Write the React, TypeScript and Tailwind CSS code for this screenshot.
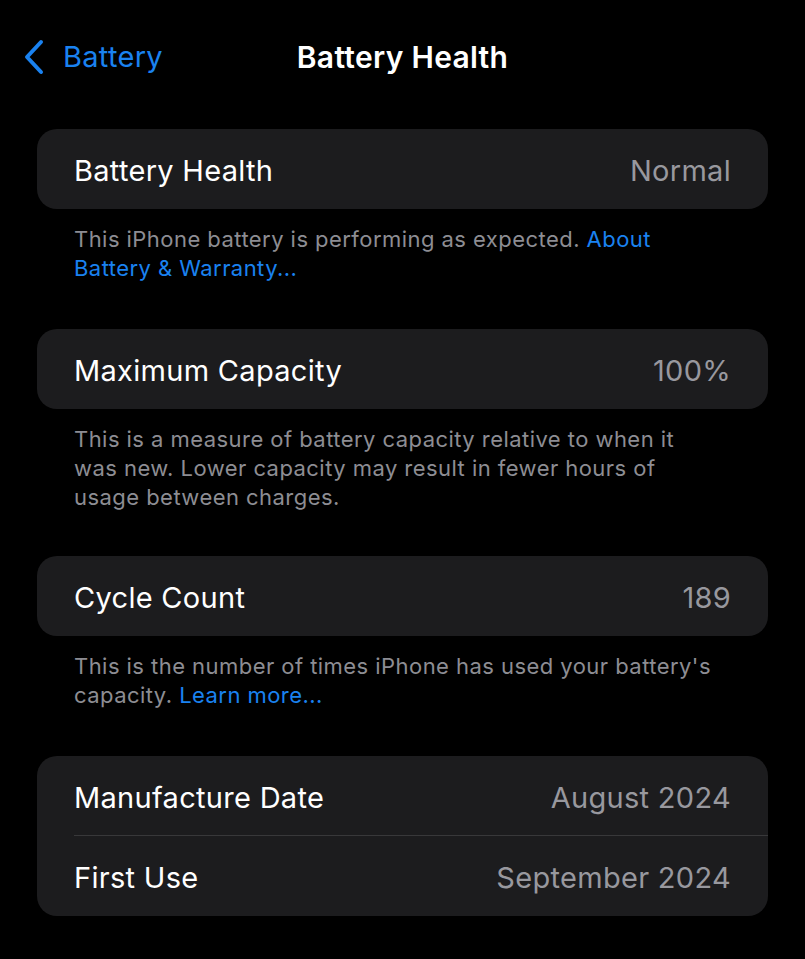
import React from 'react'

const rowText = 'text-[29px] leading-[34px] tracking-[0.3px]'

function Row({ label, value, divider }: { label: string; value: string; divider?: boolean }) {
  return (
    <div className="relative flex items-center justify-between h-[80px] px-[37px] pt-[3px]">
      <span className={`${rowText} text-white`}>{label}</span>
      <span className={`${rowText} text-[#98989e]`}>{value}</span>
      {divider && <div className="absolute bottom-0 left-[37px] right-0 h-px bg-[#38383a]" />}
    </div>
  )
}

function Footer({ children }: { children: React.ReactNode }) {
  return (
    <p className="pl-[37px] pr-[52px] pt-[16px] text-[22px] leading-[29px] text-[#8d8d93] tracking-[0.45px]">
      {children}
    </p>
  )
}

const Link = ({ children }: { children: React.ReactNode }) => (
  <span className="text-[#1a82f0]">{children}</span>
)

export default function App() {
  return (
    <div
      className="w-[805px] h-[959px] bg-black overflow-hidden"
      style={{ fontFamily: 'Inter, "Noto Sans", sans-serif' }}
    >
      {/* nav bar */}
      <div className="relative flex items-center h-[114px]">
        <div className="flex items-center pl-[22px] text-[#1a82f0]">
          <svg width="24" height="36" viewBox="0 0 24 36" fill="none" className="mr-[17px]">
            <path d="M19 3 L5 18 L19 33" stroke="#1a82f0" strokeWidth="4" strokeLinecap="round" strokeLinejoin="round" />
          </svg>
          <span className={rowText}>Battery</span>
        </div>
        <div className="absolute left-0 right-0 text-center text-[30px] leading-[34px] font-semibold text-white tracking-[0.3px]">
          Battery Health
        </div>
      </div>

      <div className="px-[37px] pt-[15px]">
        <div className="rounded-[20px] bg-[#1c1c1e]">
          <Row label="Battery Health" value="Normal" />
        </div>
        <Footer>
          This iPhone battery is performing as expected. <Link>About Battery &amp; Warranty...</Link>
        </Footer>

        <div className="mt-[46px] rounded-[20px] bg-[#1c1c1e]">
          <Row label="Maximum Capacity" value="100%" />
        </div>
        <Footer>
          This is a measure of battery capacity relative to when it was new. Lower capacity may result in fewer hours of
          usage between charges.
        </Footer>

        <div className="mt-[44px] rounded-[20px] bg-[#1c1c1e]">
          <Row label="Cycle Count" value="189" />
        </div>
        <Footer>
          This is the number of times iPhone has used your battery's capacity. <Link>Learn more...</Link>
        </Footer>

        <div className="mt-[46px] rounded-[20px] bg-[#1c1c1e] overflow-hidden">
          <Row label="Manufacture Date" value="August 2024" divider />
          <Row label="First Use" value="September 2024" />
        </div>
      </div>
    </div>
  )
}
